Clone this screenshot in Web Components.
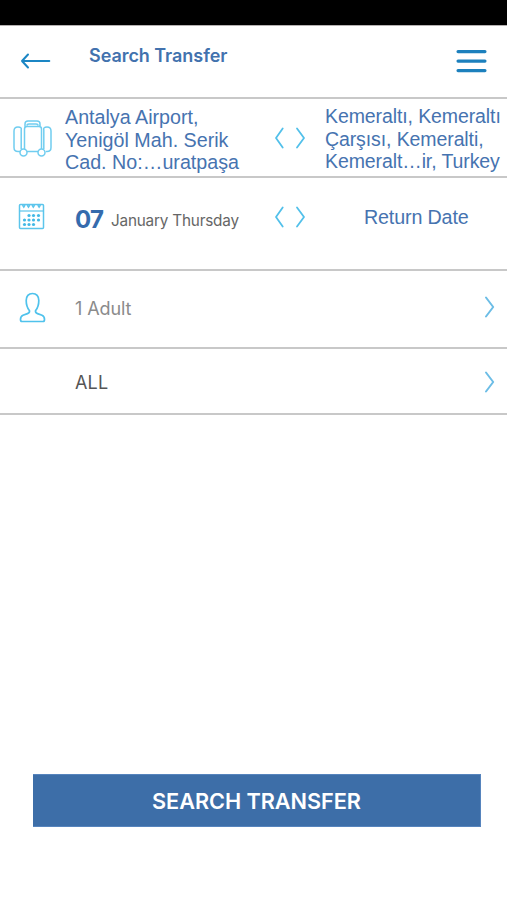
<!DOCTYPE html>
<html lang="en"><head><meta charset="utf-8"><title>Search Transfer</title>
<style>body{margin:0;background:#fff;overflow:hidden}</style></head><body>
<transfer-app></transfer-app>
<script>
function define(name, html){
  const t=document.createElement('template'); t.innerHTML=html;
  customElements.define(name, class extends HTMLElement{
    constructor(){super(); this.attachShadow({mode:'open'}).append(t.content.cloneNode(true));}
  });
}
const icons={
  back:[32,18,'<path d="M29.300 9H2M8 2.500 2 9 8 15.500" stroke="#1b86c4" stroke-width="2" stroke-linecap="round" stroke-linejoin="round"/>'],
  menu:[32,26,'<path d="M2 3.600h27M2 13.100h27M2 22.600h27" stroke="#1c80bd" stroke-width="3.1" stroke-linecap="round"/>'],
  next:[12,22,'<path d="M2 1.500 9.200 11 2 20.500" stroke="#6cbde6" stroke-width="2" stroke-linecap="round" stroke-linejoin="round"/>'],
  pair:[32,22,'<path d="M8.700 1.500 2 11l6.700 9.500M23 1.500l7 9.500-7 9.500" stroke="#52c0ea" stroke-width="1.800" stroke-linecap="round" stroke-linejoin="round"/>'],
  bags:[40,38,'<g stroke="#70cdf0" stroke-width="1.5"><path d="M7.2 31.5H5q-4 0-4-4V11Q1 7 5 7t3.200 3V29M32.800 31.500H34q4 0 4-4V11q0-4-4-4t-3.200 3V29"/><path d="M11.500 29V9q0-2.500 2.500-2.500h12q2.500 0 2.500 2.500v20M14 31.500h11M12 7V4q0-3 3-3h9q3 0 3 3v3M14 5.500q0-1.500 2-1.500h7q2 0 2 1.500"/><circle cx="10.500" cy="32.500" r="3.500"/><circle cx="28.500" cy="32.500" r="3.500"/></g>'],
  calendar:[28,28,'<g stroke="#5cc5ec" stroke-width="1.500"><rect x="1.500" y="1.500" width="24" height="24" rx="1"/><path d="M1.500 8h24" stroke-width="1.200"/><path d="M4.500 2l1.300 2L7 2m2.200 0 1.300 2 1.300-2m2.200 0 1.300 2 1.300-2m3.200 0 1.300 2 1.300-2"/></g><g fill="#43b9e6"><circle cx="11" cy="12.500" r="1.600"/><circle cx="15.500" cy="12.500" r="1.600"/><circle cx="20.500" cy="12.500" r="1.600"/><circle cx="6.500" cy="17" r="1.600"/><circle cx="11" cy="17" r="1.600"/><circle cx="15.500" cy="17" r="1.600"/><circle cx="20.500" cy="17" r="1.600"/><circle cx="6.500" cy="21.500" r="1.600"/><circle cx="11" cy="21.500" r="1.600"/><circle cx="15.500" cy="21.500" r="1.600"/></g>'],
  person:[28,32,'<path d="M13.500 1.500C9.500 1.500 7.200 4.200 7.200 8.500c0 4 .9 7.300 3.300 10.300.2 1.500-.5 2.200-2 2.800l-4.500 1.700C2 24.200 1.500 25.800 1.500 27.500q0 2 1.500 2h21q1.500 0 1.500-2c0-1.700-.5-3.300-2.500-4.200l-4.500-1.700c-1.500-.6-2.200-1.300-2-2.800 2.400-3 3.300-6.300 3.300-10.300 0-4.300-2.300-7-6.300-7Z" stroke="#4fc2ec" stroke-width="1.700"/>']
};
customElements.define('line-icon', class extends HTMLElement{
  connectedCallback(){
    if(this.shadowRoot) return;
    const [w,h,body]=icons[this.getAttribute('name')];
    this.attachShadow({mode:'open'}).innerHTML=`<style>:host{display:block;flex:none;width:${w}px;height:${h}px}svg{display:block}</style><svg width="${w}" height="${h}" viewBox="0 0 ${w} ${h}" fill="none">${body}</svg>`;
  }
});
define('status-strip','<style>:host{display:block;height:25px;background:#000;border-bottom:1px solid #b5b1b1}</style>');
define('app-header',`<style>:host{display:flex;box-sizing:border-box;height:73px;border-bottom:2px solid #c8c8c8;padding:0 19px 0 20px;align-items:flex-start}
line-icon[name=back]{margin-top:26px}line-icon[name=menu]{margin-top:22px}
h1{margin:18px auto 0 37px;font:600 18px/24px Inter,sans-serif;letter-spacing:-.05px;color:#4272ae}</style>
<line-icon name="back"></line-icon><h1><slot></slot></h1><line-icon name="menu"></line-icon>`);
define('form-row',`<style>:host{display:flex;box-sizing:border-box;border-bottom:2px solid #c8c8c8;align-items:flex-start}
.icon{flex:none;width:var(--lead,75px)}::slotted([slot=icon]){margin:var(--icon-top) 0 0 var(--icon-left)}
.main{flex:1;display:flex;align-items:flex-start}</style>
<div class="icon"><slot name="icon"></slot></div><div class="main"><slot></slot></div><slot name="end"></slot>`);
define('place-name','<style>:host{display:block;white-space:nowrap;color:#4673b0;font-family:"Liberation Sans",sans-serif}</style><slot></slot>');
define('action-button',`<style>:host{display:block}button{display:block;width:100%;height:53px;border:1px solid #5684bd;border-width:1px 1px 1px 0;padding:1px 0 0;background:#3d6ea8;color:#fff;font:600 21.700px/50px Inter,sans-serif;letter-spacing:-.05px}</style><button><slot></slot></button>`);
define('transfer-app',`<style>
:host{display:flex;flex-direction:column;height:900px;background:#fff;font-family:Inter,sans-serif}
.route{height:79px;--lead:65px;--icon-top:21px;--icon-left:12.500px}
.dates{height:93px;--icon-top:25px;--icon-left:18px}
.people{height:78px;--icon-top:21px;--icon-left:19px}
.kind{height:66px}
.from{width:209px;margin-top:7px;font-size:19.700px;line-height:22.500px}
.to{margin-top:6px;font-size:19.500px;line-height:22.500px;letter-spacing:-.1px}
.route .swap{margin-top:28px}
.pair{margin-right:19px}
.day{font:700 24px/30px Inter,sans-serif;letter-spacing:-.7px;color:#356bad;margin-top:27px;width:36px}
.month{font:400 15.300px/20px Inter,sans-serif;letter-spacing:-.2px;color:#666;margin-top:32.500px;width:163px;white-space:nowrap}
.return{font-size:19.700px;letter-spacing:-.15px;line-height:24px;margin:27px 0 0 58px}
.adult{font-size:18px;line-height:24px;letter-spacing:-.1px;color:#8b8b8b;margin-top:26px}
.all{font-size:18px;line-height:24px;letter-spacing:.2px;color:#555;margin-top:22px}
.next{margin:25px 11.500px 0 0}.kind .next{margin-top:22px}
action-button{margin:auto 26px 73px 33px}
</style>
<status-strip></status-strip><app-header>Search Transfer</app-header>
<form-row class="route"><line-icon slot="icon" name="bags"></line-icon><place-name class="from">Antalya Airport,<br>Yenigöl Mah. Serik<br>Cad. No:…uratpaşa</place-name><line-icon name="pair" class="swap pair"></line-icon><place-name class="to">Kemeraltı, Kemeraltı<br>Çarşısı, Kemeralti,<br>Kemeralt…ir, Turkey</place-name></form-row>
<form-row class="dates"><line-icon slot="icon" name="calendar"></line-icon><span class="day">07</span><span class="month">January Thursday</span><line-icon name="pair" style="margin-top:28px"></line-icon><place-name class="return">Return Date</place-name></form-row>
<form-row class="people"><line-icon slot="icon" name="person"></line-icon><span class="adult">1 Adult</span><line-icon slot="end" class="next" name="next"></line-icon></form-row>
<form-row class="kind"><span class="all">ALL</span><line-icon slot="end" class="next" name="next"></line-icon></form-row>
<action-button>SEARCH TRANSFER</action-button>`);
</script></body></html>
